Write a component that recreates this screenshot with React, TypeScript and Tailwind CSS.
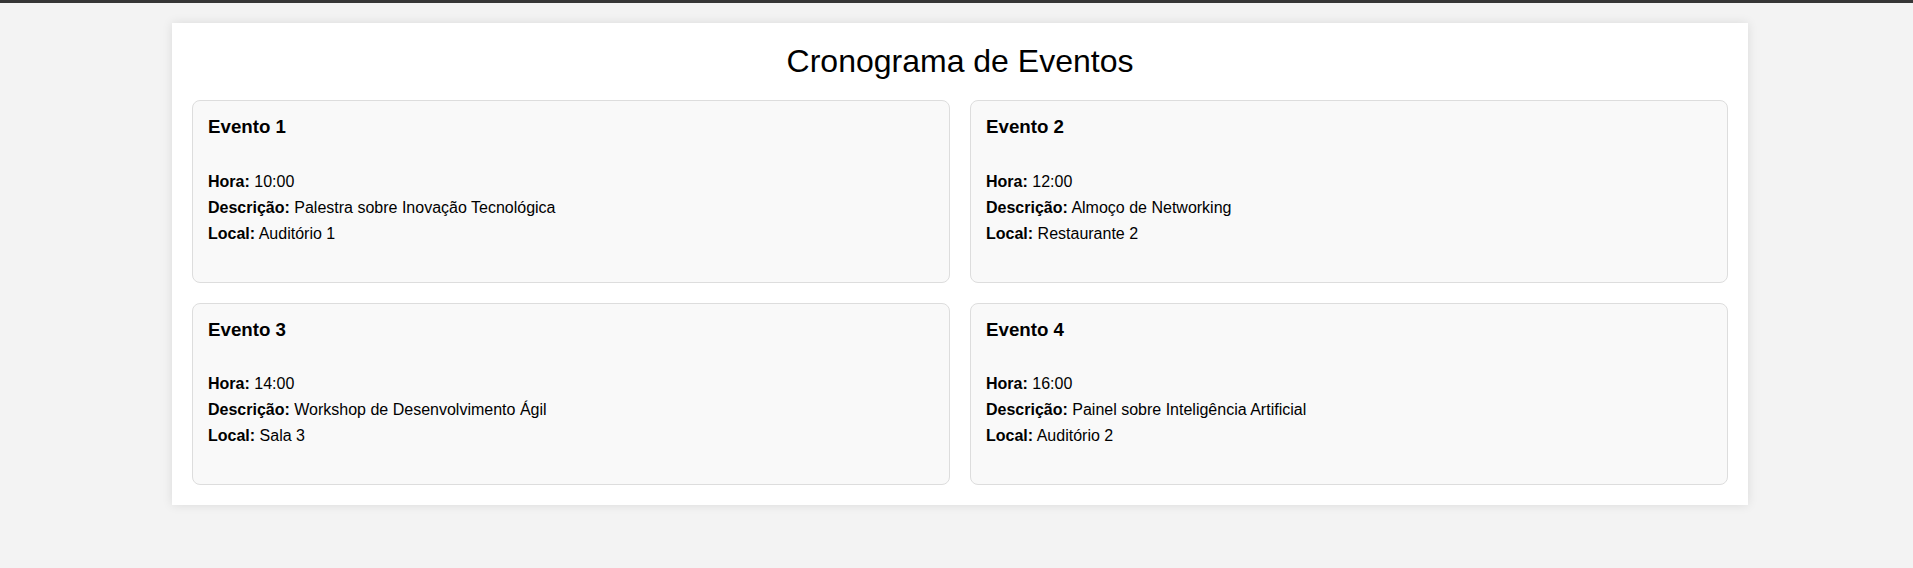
import React from 'react';

interface Evento {
  titulo: string;
  hora: string;
  descricao: string;
  local: string;
}

const eventos: Evento[] = [
  { titulo: 'Evento 1', hora: '10:00', descricao: 'Palestra sobre Inovação Tecnológica', local: 'Auditório 1' },
  { titulo: 'Evento 2', hora: '12:00', descricao: 'Almoço de Networking', local: 'Restaurante 2' },
  { titulo: 'Evento 3', hora: '14:00', descricao: 'Workshop de Desenvolvimento Ágil', local: 'Sala 3' },
  { titulo: 'Evento 4', hora: '16:00', descricao: 'Painel sobre Inteligência Artificial', local: 'Auditório 2' },
];

const EventoCard: React.FC<{ evento: Evento }> = ({ evento }) => (
  <div className="bg-[#f9f9f9] border border-[#ddd] rounded-[8px] px-[15px] pt-[15px] pb-[39px]">
    <h3 className="text-[18.72px] leading-[21.5px] font-bold">{evento.titulo}</h3>
    <div className="mt-[35px] flex flex-col gap-[8px] text-[16px] leading-[18px]">
      <p>
        <strong>Hora:</strong> {evento.hora}
      </p>
      <p>
        <strong>Descrição:</strong> {evento.descricao}
      </p>
      <p>
        <strong>Local:</strong> {evento.local}
      </p>
    </div>
  </div>
);

export default function App() {
  return (
    <div
      className="min-h-[568px] bg-[#f3f3f3] border-t-[3px] border-[#363636] pt-[20px] text-black"
      style={{ fontFamily: '"Liberation Sans", Arial, sans-serif' }}
    >
      <div className="ml-[172px] w-[1576px] bg-white p-[20px] shadow-[0_0_10px_rgba(0,0,0,0.1)]">
        <h1 className="text-center text-[32px] leading-[37px] mb-[20px]">Cronograma de Eventos</h1>
        <div className="grid grid-cols-2 gap-[20px]">
          {eventos.map((evento) => (
            <EventoCard key={evento.titulo} evento={evento} />
          ))}
        </div>
      </div>
    </div>
  );
}
